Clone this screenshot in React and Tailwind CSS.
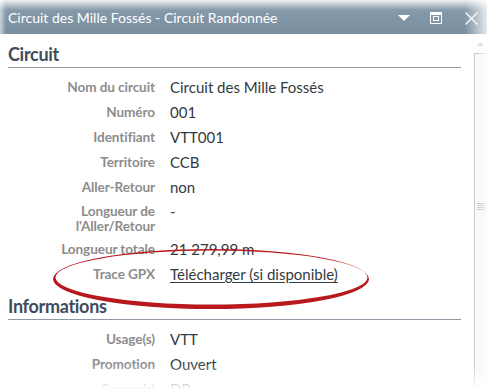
import React from 'react'

const circuit = [
  { label: 'Nom du circuit', value: 'Circuit des Mille Fossés' },
  { label: 'Numéro', value: '001' },
  { label: 'Identifiant', value: 'VTT001' },
  { label: 'Territoire', value: 'CCB' },
  { label: 'Aller-Retour', value: 'non' },
  { label: ['Longueur de', "l'Aller/Retour"], value: '-' },
  { label: 'Longueur totale', value: '21 279,99 m' },
  { label: 'Trace GPX', value: 'Télécharger (si disponible)', link: true },
]

const infos = [
  { label: 'Usage(s)', value: 'VTT' },
  { label: 'Promotion', value: 'Ouvert' },
  { label: 'Source(s)', value: 'DR' },
]

function Row({ label, value, link }) {
  const multi = Array.isArray(label)
  return (
    <div className={`flex ${multi ? 'pt-[4px] pb-[3px]' : 'py-[5px]'}`}>
      <div className="w-[147px] shrink-0 text-right text-[13.6px] font-bold leading-[15px] tracking-[-0.1px] text-[#8d8d8d]">
        {multi ? label.map(l => <div key={l}>{l}</div>) : label}
      </div>
      <div className={`ml-[15px] text-[15px] leading-[15px] text-[#333a40] ${link ? 'underline underline-offset-2' : ''}`}>
        {value}
      </div>
    </div>
  )
}

function Section({ title, rows }) {
  return (
    <div>
      <h2 className="text-[18px] font-bold leading-[22px] tracking-[-0.3px] text-[#3f4c59] pb-[2px] border-b border-[#8f99a3]">
        {title}
      </h2>
      <div className="pt-[7px]">
        {rows.map(r => <Row key={Array.isArray(r.label) ? r.label[0] : r.label} {...r} />)}
      </div>
    </div>
  )
}

export default function App() {
  return (
    <div className="relative w-[487px] h-[389px] overflow-hidden bg-white" style={{ fontFamily: 'Lato, "Open Sans", sans-serif' }}>
      {/* title bar */}
      <div className="h-[34px] flex items-center pl-[8px] bg-gradient-to-b from-[#eef1f3] via-[#8599a9] via-30% to-[#798e9e]">
        <span className="flex-1 text-[14px] text-white leading-none pt-[2px]">Circuit des Mille Fossés - Circuit Randonnée</span>
        <svg width="12" height="7" viewBox="0 0 12 7" className="mr-[20px] mt-[2px]">
          <path d="M0 0 H12 L6 6 Z" fill="#fff" />
        </svg>
        <svg width="12" height="12" viewBox="0 0 12 12" className="mr-[23px] mt-[2px]">
          <rect x="0.5" y="0.5" width="11" height="11" fill="none" stroke="#fff" />
          <rect x="0" y="0" width="12" height="3" fill="#fff" />
          <rect x="3.5" y="4.5" width="5" height="4" fill="none" stroke="#fff" />
        </svg>
        <svg width="13" height="13" viewBox="0 0 13 13" className="mr-[9px] mt-[2px]">
          <path d="M0.5 0.5 L12.5 12.5 M12.5 0.5 L0.5 12.5" stroke="#fff" strokeWidth="1.2" />
        </svg>
      </div>

      <div className="flex h-[355px]">
        <div className="flex-1 pl-[8px] pr-[13px] pt-[9px] flex flex-col gap-[8px]">
          <Section title="Circuit" rows={circuit} />
          <Section title="Informations" rows={infos} />
        </div>
        {/* scrollbar */}
        <div className="w-[13px] shrink-0 flex flex-col">
          <div className="h-[19px] flex items-center justify-center">
            <svg width="7" height="4" viewBox="0 0 7 4"><path d="M0 4 L3.5 0 L7 4 Z" fill="#b8b8b8" /></svg>
          </div>
          <div className="flex-1 border-l border-t border-[#a9a9a9] bg-gradient-to-r from-[#f7f7f7] to-[#ececec] flex items-center justify-center">
            <div className="flex flex-col gap-[1px] mb-[30px]">
              <div className="w-[8px] h-[1px] bg-[#9a9a9a]" />
              <div className="w-[8px] h-[1px] bg-[#9a9a9a]" />
              <div className="w-[8px] h-[1px] bg-[#9a9a9a]" />
              <div className="w-[8px] h-[1px] bg-[#9a9a9a]" />
            </div>
          </div>
        </div>
      </div>

      {/* red annotation ellipse */}
      <svg className="absolute left-0 top-0 pointer-events-none" width="487" height="389" viewBox="0 0 487 389">
        <path
          fillRule="evenodd"
          fill="#b8191d"
          d="M53 279 A158 30 0 1 0 369 279 A158 30 0 1 0 53 279 Z M55.5 277.5 A156 27 0 1 0 367.5 277.5 A156 27 0 1 0 55.5 277.5 Z"
        />
      </svg>

      {/* edge fades */}
      <div className="absolute right-0 top-0 h-full w-[22px] bg-gradient-to-r from-transparent to-white/80 pointer-events-none" />
      <div className="absolute left-0 bottom-0 w-full h-[26px] bg-gradient-to-b from-transparent to-white/95 pointer-events-none" />
      <div className="absolute left-0 top-0 h-[34px] w-[6px] bg-gradient-to-r from-white/60 to-transparent pointer-events-none" />
    </div>
  )
}
